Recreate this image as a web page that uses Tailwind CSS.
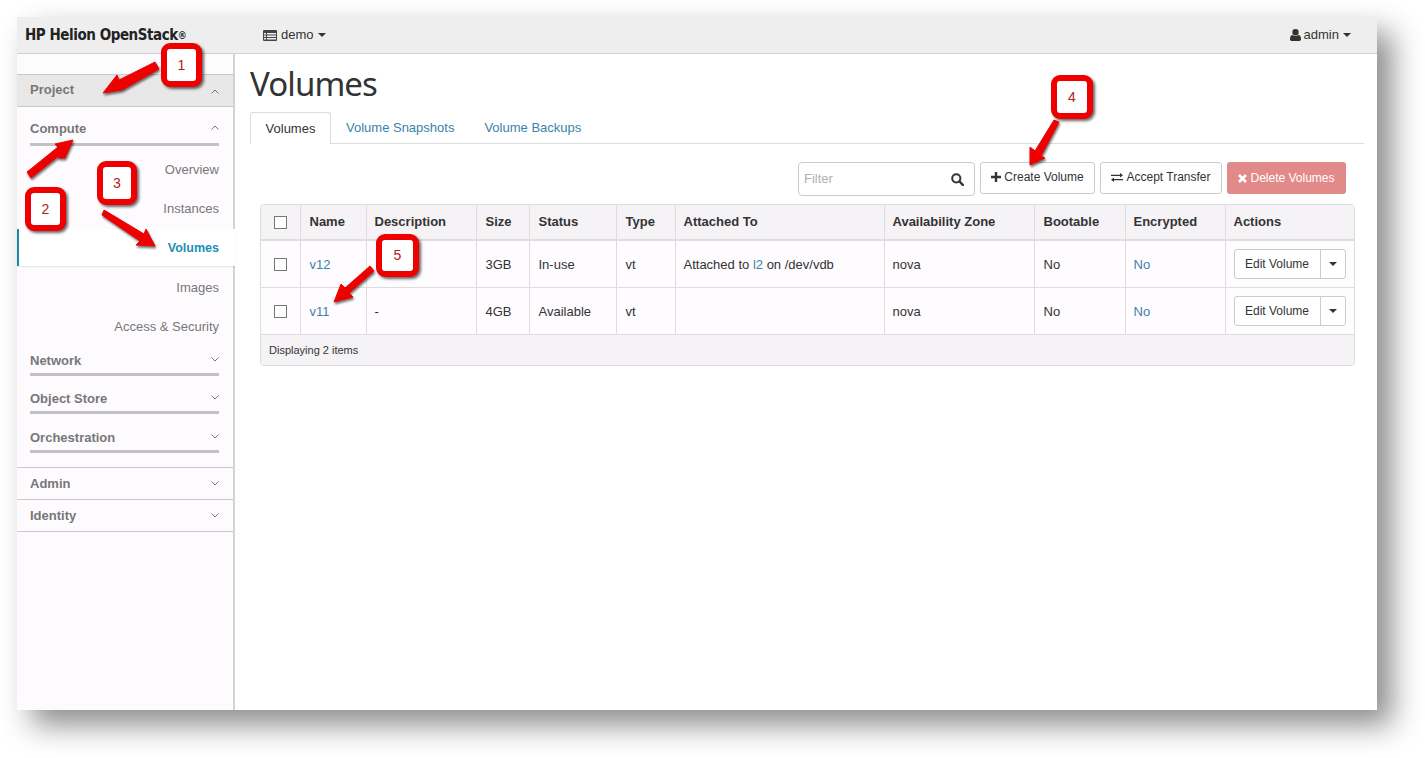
<!DOCTYPE html>
<html lang="en">
<head>
    <meta charset="UTF-8">
    <title>Volumes - HP Helion OpenStack</title>
    <script src="https://cdn.jsdelivr.net/npm/@tailwindcss/browser@4"></script>
</head>
<body class="bg-white font-['Liberation_Sans',Arial,sans-serif] text-[13px] text-[#333]">
<div class="relative w-[1425px] h-[758px] overflow-hidden bg-white pt-[17px] pl-[17px]">
    <!-- Window -->
    <div class="w-[1360px] h-[693px] flex flex-col bg-white shadow-[15px_15px_28px_rgba(0,0,0,0.45)]">
        <!-- Top bar -->
        <header class="h-[37px] shrink-0 flex items-center bg-[#eeeeee] border-b border-[#cfcfcf] text-[13px] text-[#333]">
            <div class="w-[246px] pl-2 font-['DejaVu_Sans',sans-serif] [font-stretch:condensed] font-bold text-[15px] tracking-[-0.45px] text-[#222]">HP Helion OpenStack<sup class="text-[10px] relative -top-[1px] align-baseline">®</sup></div>
            <div class="flex items-center gap-[4px]">
                <svg class="w-[14px] h-[11px]" viewBox="0 0 14 11"><path fill="#444" fill-rule="evenodd" d="M1 0h12a1 1 0 0 1 1 1v9a1 1 0 0 1-1 1H1a1 1 0 0 1-1-1V1a1 1 0 0 1 1-1zM1 3v1.5h2V3zm3 0v1.5h9V3zM1 5.5V7h2V5.5zm3 0V7h9V5.5zM1 8v1.500h2V8zm3 0v1.500h9V8z"/></svg>
                <span>demo</span>
                <svg class="w-[8px] h-[4px]" viewBox="0 0 8 4"><path fill="#333" d="M0 0h8L4 4z"/></svg>
            </div>
            <div class="ml-auto mr-[26px] flex items-center gap-[3px]">
                <svg class="w-[11px] h-[12px]" viewBox="0 0 11 12"><path fill="#333" d="M5.500 0a3.200 3.200 0 0 1 3.200 3.200 3.200 3.200 0 0 1-6.400 0A3.200 3.200 0 0 1 5.500 0zM2.500 6c.8.700 1.800 1.100 3 1.100s2.200-.4 3-1.100c1.700.2 2.500 1.600 2.500 3.900 0 1.300-.8 2.100-2 2.100H2c-1.200 0-2-.8-2-2.100C0 7.600.8 6.200 2.500 6z"/></svg>
                <span>admin</span>
                <svg class="w-[8px] h-[4px] ml-[1px]" viewBox="0 0 8 4"><path fill="#333" d="M0 0h8L4 4z"/></svg>
            </div>
        </header>

        <div class="flex flex-1 min-h-0">
            <!-- Sidebar -->
            <aside class="w-[218px] shrink-0 bg-[#fefbfe] border-r-2 border-[#d4d2d4] text-[#777] pt-[20px]">
                <div class="h-[33px] flex items-center justify-between pl-[13px] pr-[14px] bg-[#e9e8e9] border-y border-[#c9c9c9] font-bold">
                    <span class="-mt-[1px]">Project</span>
                    <svg class="w-[8px] h-[5px] mt-[1px]" viewBox="0 0 8 5"><path fill="none" stroke="#777" d="M.5 4.500 4 1l3.500 3.500"/></svg>
                </div>
                <div class="mx-[13px] mr-[14px] h-[37px] mt-[2px] pt-[10px] flex items-start justify-between border-b-[3px] border-[#c4c1c4] font-bold">
                    <span>Compute</span>
                    <svg class="w-[8px] h-[5px] mt-[6px]" viewBox="0 0 8 5"><path fill="none" stroke="#777" d="M.5 4.500 4 1l3.500 3.500"/></svg>
                </div>
                <div class="h-[39px] mt-[4px] flex items-center justify-end pr-[14px]">Overview</div>
                <div class="h-[39px] flex items-center justify-end pr-[14px]">Instances</div>
                <div class="h-[37px] mt-[1px] pt-[2px] flex items-center justify-end pr-[16px] bg-white border-l-2 border-[#1d8aa5] font-bold text-[12.5px] text-[#1a90b4] -mr-[2px] shadow-[0_1px_1px_rgba(0,0,0,0.08)]">Volumes</div>
                <div class="h-[40px] mt-[1px] pt-[1px] flex items-center justify-end pr-[14px]">Images</div>
                <div class="h-[39px] flex items-center justify-end pr-[14px]">Access &amp; Security</div>
                <div class="mx-[13px] mr-[14px] h-[31px] -mt-[1px] pt-[6px] flex items-start justify-between border-b-[3px] border-[#c4c1c4] font-bold">
                    <span>Network</span>
                    <svg class="w-[8px] h-[5px] mt-[6px]" viewBox="0 0 8 5"><path fill="none" stroke="#777" d="M.5.500 4 4 7.500.500"/></svg>
                </div>
                <div class="mx-[13px] mr-[14px] h-[38px] pt-[13px] flex items-start justify-between border-b-[3px] border-[#c4c1c4] font-bold">
                    <span>Object Store</span>
                    <svg class="w-[8px] h-[5px] mt-[6px]" viewBox="0 0 8 5"><path fill="none" stroke="#777" d="M.5.500 4 4 7.500.500"/></svg>
                </div>
                <div class="mx-[13px] mr-[14px] h-[39px] pt-[14px] flex items-start justify-between border-b-[3px] border-[#c4c1c4] font-bold">
                    <span>Orchestration</span>
                    <svg class="w-[8px] h-[5px] mt-[6px]" viewBox="0 0 8 5"><path fill="none" stroke="#777" d="M.5.500 4 4 7.500.500"/></svg>
                </div>
                <div class="h-[33px] mt-[14px] flex items-center justify-between pl-[13px] pr-[14px] border-y border-[#c9c7c9] font-bold">
                    <span>Admin</span>
                    <svg class="w-[8px] h-[5px]" viewBox="0 0 8 5"><path fill="none" stroke="#777" d="M.5.500 4 4 7.500.500"/></svg>
                </div>
                <div class="h-[32px] flex items-center justify-between pl-[13px] pr-[14px] border-b border-[#c9c7c9] font-bold">
                    <span>Identity</span>
                    <svg class="w-[8px] h-[5px]" viewBox="0 0 8 5"><path fill="none" stroke="#777" d="M.5.500 4 4 7.500.500"/></svg>
                </div>
            </aside>

            <!-- Main -->
            <main class="flex-1 min-w-0 pl-[15px] pr-[13px]">
                <h1 class="mt-[8px] h-[51px] font-['Noto_Sans',sans-serif] text-[33px] tracking-[-0.9px] leading-[44px] text-[#333]">Volumes</h1>
                <nav class="flex h-[32px] border-b border-[#dddddd] -mt-[1px]">
                    <span class="w-[81px] h-[32px] flex items-center justify-center bg-white border border-b-0 border-[#dddddd] rounded-t-[3px]">Volumes</span>
                    <span class="ml-[15px] flex items-center font-medium text-[#3a83a8]">Volume Snapshots</span>
                    <span class="ml-[30px] flex items-center font-medium text-[#3a83a8]">Volume Backups</span>
                </nav>

                <div class="flex justify-end items-start gap-[5px] mt-[18px] pr-[18px] text-[12px]">
                    <div class="w-[177px] h-[34px] flex items-center justify-between pl-[5px] pr-[10px] border border-[#cccccc] rounded-[4px] bg-white">
                        <span class="text-[#b0b0b0] text-[13px]">Filter</span>
                        <svg class="w-[13px] h-[13px]" viewBox="0 0 13 13"><circle cx="5.300" cy="5.300" r="4.100" fill="none" stroke="#333" stroke-width="2"/><path stroke="#333" stroke-width="2.400" stroke-linecap="round" d="m8.500 8.500 3.300 3.300"/></svg>
                    </div>
                    <button class="w-[115px] h-[32px] pb-[2px] flex items-center justify-center gap-[3px] border border-[#cccccc] rounded-[3px] bg-white text-[#333]">
                        <svg class="w-[10px] h-[10px]" viewBox="0 0 10 10"><path fill="#333" d="M3.800 0h2.400v3.800H10v2.400H6.200V10H3.800V6.200H0V3.800h3.800z"/></svg>
                        Create Volume
                    </button>
                    <button class="w-[122px] h-[32px] pb-[2px] flex items-center justify-center gap-[3px] border border-[#cccccc] rounded-[3px] bg-white text-[#333]">
                        <svg class="w-[12px] h-[9px]" viewBox="0 0 12 9"><path fill="#333" d="M9 0l3 2.300L9 4.500V3H0V1.700h9zM3 4.500V6h9v1.300H3V9L0 6.700z"/></svg>
                        Accept Transfer
                    </button>
                    <button class="w-[119px] h-[32px] flex items-center justify-center gap-[3px] rounded-[3px] bg-[#e28a8a] text-white">
                        <svg class="w-[9px] h-[9px]" viewBox="0 0 9 9"><path stroke="#fff" stroke-width="2.600" d="m1 1 7 7M8 1 1 8"/></svg>
                        Delete Volumes
                    </button>
                </div>

                <!-- Table -->
                <div class="ml-[10px] mr-[9px] mt-[8px] w-[1095px] h-[162px] border border-[#dddddd] rounded-[4px] overflow-hidden bg-[#fefcfe]">
                    <table class="w-full table-fixed border-collapse">
                        <colgroup>
                            <col class="w-[39px]"><col class="w-[66px]"><col class="w-[110px]"><col class="w-[53px]"><col class="w-[87px]"><col class="w-[59px]"><col class="w-[209px]"><col class="w-[150px]"><col class="w-[91px]"><col class="w-[100px]"><col>
                        </colgroup>
                        <thead>
                            <tr class="h-[35px] bg-[#f5f3f6] text-left font-bold border-b-2 border-[#dddddd]">
                                <th class="border-r border-[#dddddd]"><div class="w-[13px] h-[13px] mx-auto border border-[#777] bg-white"></div></th>
                                <th class="pl-[9px] border-r border-[#dddddd]">Name</th>
                                <th class="px-2 border-r border-[#dddddd]">Description</th>
                                <th class="pl-[9px] border-r border-[#dddddd]">Size</th>
                                <th class="pl-[9px] border-r border-[#dddddd]">Status</th>
                                <th class="pl-[9px] border-r border-[#dddddd]">Type</th>
                                <th class="px-2 border-r border-[#dddddd]">Attached To</th>
                                <th class="px-2 border-r border-[#dddddd]">Availability Zone</th>
                                <th class="pl-[9px] border-r border-[#dddddd]">Bootable</th>
                                <th class="px-2 border-r border-[#dddddd]">Encrypted</th>
                                <th class="px-2">Actions</th>
                            </tr>
                        </thead>
                        <tbody>
                            <tr class="h-[47px] border-b border-[#dddddd] [&>td]:pt-[2px]">
                                <td class="border-r border-[#dddddd]"><div class="w-[13px] h-[13px] mx-auto border border-[#777] bg-white"></div></td>
                                <td class="pl-[9px] border-r border-[#dddddd] text-[#3a83a8]">v12</td>
                                <td class="px-2 border-r border-[#dddddd]"></td>
                                <td class="pl-[9px] border-r border-[#dddddd]">3GB</td>
                                <td class="pl-[9px] border-r border-[#dddddd]">In-use</td>
                                <td class="pl-[9px] border-r border-[#dddddd]">vt</td>
                                <td class="px-2 border-r border-[#dddddd]">Attached to <span class="text-[#3a83a8]">l2</span> on /dev/vdb</td>
                                <td class="px-2 border-r border-[#dddddd]">nova</td>
                                <td class="pl-[9px] border-r border-[#dddddd]">No</td>
                                <td class="px-2 border-r border-[#dddddd] text-[#3a83a8]">No</td>
                                <td class="pl-2 pt-0!">
                                    <div class="flex w-[112px] h-[30px] border border-[#cccccc] rounded-[3px] bg-white text-[12px] text-[#333]">
                                        <span class="w-[86px] flex items-center justify-center border-r border-[#cccccc]">Edit Volume</span>
                                        <span class="flex-1 flex items-center justify-center"><svg class="w-[8px] h-[4px]" viewBox="0 0 8 4"><path fill="#333" d="M0 0h8L4 4z"/></svg></span>
                                    </div>
                                </td>
                            </tr>
                            <tr class="h-[47px] border-b border-[#dddddd] [&>td]:pt-[2px]">
                                <td class="border-r border-[#dddddd]"><div class="w-[13px] h-[13px] mx-auto border border-[#777] bg-white"></div></td>
                                <td class="pl-[9px] border-r border-[#dddddd] text-[#3a83a8]">v11</td>
                                <td class="px-2 border-r border-[#dddddd]">-</td>
                                <td class="pl-[9px] border-r border-[#dddddd]">4GB</td>
                                <td class="pl-[9px] border-r border-[#dddddd]">Available</td>
                                <td class="pl-[9px] border-r border-[#dddddd]">vt</td>
                                <td class="px-2 border-r border-[#dddddd]"></td>
                                <td class="px-2 border-r border-[#dddddd]">nova</td>
                                <td class="pl-[9px] border-r border-[#dddddd]">No</td>
                                <td class="px-2 border-r border-[#dddddd] text-[#3a83a8]">No</td>
                                <td class="pl-2 pt-0!">
                                    <div class="flex w-[112px] h-[30px] border border-[#cccccc] rounded-[3px] bg-white text-[12px] text-[#333]">
                                        <span class="w-[86px] flex items-center justify-center border-r border-[#cccccc]">Edit Volume</span>
                                        <span class="flex-1 flex items-center justify-center"><svg class="w-[8px] h-[4px]" viewBox="0 0 8 4"><path fill="#333" d="M0 0h8L4 4z"/></svg></span>
                                    </div>
                                </td>
                            </tr>
                        </tbody>
                    </table>
                    <div class="h-[31px] flex items-center px-2 bg-[#f5f3f6] text-[11px] text-[#333]">Displaying 2 items</div>
                </div>
            </main>
        </div>
    </div>

    <!-- Callout arrows -->
    <svg class="absolute left-0 top-0 w-[1425px] h-[758px] pointer-events-none drop-shadow-[1px_2px_1px_rgba(0,0,0,0.55)]" viewBox="0 0 1425 758">
        <g fill="#ee0000" stroke="#ee0000" stroke-width="1" stroke-linejoin="round">
            <path d="M155 62 159 69 122 90 103 93 117 75 119 80z"/>
            <path d="M27 172 31 178 61 154 58 158 65 158 73 140 55 144 58 147z"/>
            <path d="M104 210 102 215 140 241 136 245 155 246 146 229 144 234z"/>
            <path d="M1054 120 1059 122 1041 156 1045 158 1030 165 1030 147 1035 151z"/>
            <path d="M370 266 374 271 349 293 353 297 334 302 341 284 345 288z"/>
        </g>
    </svg>

    <!-- Numbered callouts -->
    <div class="absolute left-[161px] top-[43px] w-[41px] h-[44px] flex items-center justify-center border-[6px] border-[#ee0000] rounded-[9px] bg-white text-[14px] text-[#b02020] shadow-[2px_2px_3px_rgba(0,0,0,0.6)]">1</div>
    <div class="absolute left-[25px] top-[187px] w-[41px] h-[44px] flex items-center justify-center border-[6px] border-[#ee0000] rounded-[9px] bg-white text-[14px] text-[#b02020] shadow-[2px_2px_3px_rgba(0,0,0,0.6)]">2</div>
    <div class="absolute left-[97px] top-[161px] w-[40px] h-[44px] flex items-center justify-center border-[6px] border-[#ee0000] rounded-[9px] bg-white text-[14px] text-[#b02020] shadow-[2px_2px_3px_rgba(0,0,0,0.6)]">3</div>
    <div class="absolute left-[1051px] top-[75px] w-[42px] h-[44px] flex items-center justify-center border-[6px] border-[#ee0000] rounded-[9px] bg-white text-[14px] text-[#b02020] shadow-[2px_2px_3px_rgba(0,0,0,0.6)]">4</div>
    <div class="absolute left-[376px] top-[234px] w-[43px] h-[43px] flex items-center justify-center border-[6px] border-[#ee0000] rounded-[9px] bg-white text-[14px] text-[#b02020] shadow-[2px_2px_3px_rgba(0,0,0,0.6)]">5</div>
</div>
</body>
</html>
